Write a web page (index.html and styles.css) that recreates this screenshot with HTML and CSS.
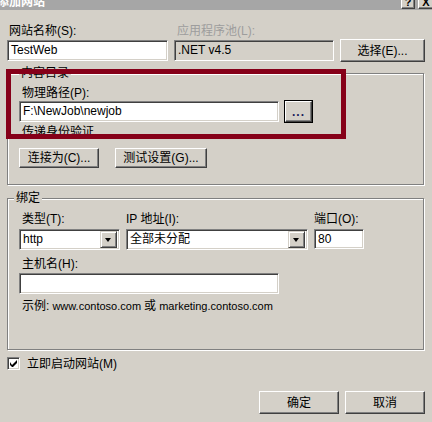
FILE: index.html
```html
<!DOCTYPE html>
<html>
    <head>
        <meta charset="UTF-8">
        <title>添加网站</title>
        <link rel="stylesheet" href="styles.css">
    </head>
    <body>
        <div class="titlebar">
            <span class="title">添加网站</span>
            <span class="cap-btn help">?</span>
            <span class="cap-btn close">X</span>
        </div>
        <div class="dialog">
            <div class="site-row">
                <label class="lbl">网站名称(S):</label>
                <label class="lbl disabled">应用程序池(L):</label>
                <span></span>
                <div class="edit">TestWeb</div>
                <div class="edit readonly">.NET v4.5</div>
                <button class="btn">选择(E)...</button>
            </div>
            <fieldset class="group content-dir">
                <legend>内容目录</legend>
                <label class="lbl">物理路径(P):</label>
                <div class="path-row">
                    <div class="edit path">F:\NewJob\newjob</div>
                    <button class="btn default browse">...</button>
                </div>
                <div class="lbl auth">传递身份验证</div>
                <div class="btn-row">
                    <button class="btn small connect">连接为(C)...</button>
                    <button class="btn small test">测试设置(G)...</button>
                </div>
            </fieldset>
            <fieldset class="group binding">
                <legend>绑定</legend>
                <div class="bind-row">
                    <label class="lbl indent">类型(T):</label>
                    <label class="lbl">IP 地址(I):</label>
                    <label class="lbl">端口(O):</label>
                    <div class="combo"><span class="value">http</span><span class="drop"></span></div>
                    <div class="combo"><span class="value cjk">全部未分配</span><span class="drop"></span></div>
                    <div class="edit port">80</div>
                </div>
                <label class="lbl indent host-lbl">主机名(H):</label>
                <div class="edit host"></div>
                <div class="hint"><span class="cjk">示例:</span> www.contoso.com <span class="cjk">或</span> marketing.contoso.com</div>
            </fieldset>
            <div class="check-row">
                <span class="checkbox">
                    <svg width="7" height="7" viewBox="0 0 7 7"><path d="M0 2v3l2 2h1l4-4V0L2 5z" fill="#000"/></svg>
                </span>
                <span class="lbl">立即启动网站(M)</span>
            </div>
            <div class="footer">
                <button class="btn wide">确定</button>
                <button class="btn wide">取消</button>
            </div>
        </div>
        <!-- marker drawn around the content directory box -->
        <div class="highlight"></div>
    </body>
</html>
```

FILE: styles.css
```css
html, body {
    margin:0;
    width:432px;
    height:422px;
    overflow:hidden;
}
body {
    position:relative;
    background:#d4d0c8;
    color:#000;
    font-family:"Liberation Sans", "Noto Sans CJK SC", sans-serif;
    font-size:12px;
    line-height:14px;
}
.titlebar {
    display:flex;
    height:10px;
    overflow:hidden;
    background:#a6a6a6;
}
.title {
    flex:1;
    margin:-5px 0 0 -3px;
    color:#fff;
    font-weight:bold;
    font-size:12px;
    line-height:14px;
}
.cap-btn {
    box-sizing:border-box;
    height:14px;
    margin-top:-5px;
    background:#d4d0c8;
    border:1px solid;
    border-color:#fff #404040 #404040 #fff;
    box-shadow:inset -1px -1px #808080;
    font-weight:bold;
    font-size:11px;
    line-height:13px;
    text-align:center;
}
.help {
    width:14px;
    margin-right:3px;
}
.close {
    width:16px;
    margin-right:-2px;
}
.dialog {
    padding:14px 0 0 7px;
}
.lbl {
    display:block;
    white-space:nowrap;
}
.disabled {
    color:#9d9d9d;
    padding-left:3px;
}
.site-row {
    display:grid;
    grid-template-columns:161px 160px 85px;
    grid-template-rows:14px 23px;
    column-gap:6px;
    row-gap:1px;
    align-items:center;
}
.site-row > .lbl:first-child {
    padding-left:2px;
}
.edit {
    box-sizing:border-box;
    height:21px;
    background:#fff;
    border:1px solid;
    border-color:#808080 #fff #fff #808080;
    box-shadow:inset 1px 1px #404040, inset -1px -1px #d4d0c8;
    padding-left:3px;
    font-size:12px;
    line-height:19px;
    white-space:nowrap;
    overflow:hidden;
}
.readonly {
    background:#d4d0c8;
}
.btn {
    box-sizing:border-box;
    height:23px;
    padding:0;
    background:#d4d0c8;
    border:1px solid;
    border-color:#fff #404040 #404040 #fff;
    box-shadow:inset -1px -1px #808080;
    font:inherit;
    color:#000;
}
.btn.default {
    outline:1px solid #000;
    outline-offset:0;
    border-color:#fff #404040 #404040 #fff;
}
.group {
    box-sizing:border-box;
    width:417px;
    margin:0;
    border:1px solid #808080;
    box-shadow:inset 1px 1px #fff, 1px 1px #fff;
    min-width:0;
}
.group legend {
    padding:0 2px;
    background:#d4d0c8;
    line-height:14px;
}
.content-dir {
    margin-top:4px;
    padding:6px 0 16px 11px;
}
.content-dir > .lbl:first-of-type {
    padding-left:3px;
}
.path-row {
    display:flex;
    align-items:center;
    gap:6px;
    height:23px;
}
.path {
    width:260px;
}
.browse {
    width:27px;
    height:21px;
    font-weight:bold;
    letter-spacing:1px;
    line-height:12px;
    color:#1a1a5a;
}
.auth {
    margin-top:2px;
    padding-left:3px;
}
.btn-row {
    display:flex;
    gap:16px;
    margin-top:9px;
}
.btn.small {
    height:20px;
}
.connect {
    width:80px;
}
.test {
    width:92px;
}
.binding {
    margin-top:6px;
    padding:7px 0 36px 11px;
}
.binding legend {
    margin-left:-5px;
}
.bind-row {
    display:grid;
    grid-template-columns:101px 182px 50px;
    grid-template-rows:14px 21px;
    column-gap:6px;
    row-gap:3px;
}
.indent {
    padding-left:3px;
}
.combo {
    box-sizing:border-box;
    display:flex;
    height:21px;
    background:#fff;
    border:1px solid;
    border-color:#808080 #fff #fff #808080;
    box-shadow:inset 1px 1px #404040, inset -1px -1px #d4d0c8;
    padding:1px 2px 2px 1px;
}
.combo .value {
    flex:1;
    padding-left:2px;
    line-height:17px;
}
.drop {
    box-sizing:border-box;
    position:relative;
    width:17px;
    height:17px;
    background:#d4d0c8;
    border:1px solid;
    border-color:#d4d0c8 #404040 #404040 #d4d0c8;
    box-shadow:inset 1px 1px #fff, inset -1px -1px #808080;
}
/* little black arrow in the drop button */
.drop::after {
    content:"";
    position:absolute;
    left:4px;
    top:6px;
    border-left:3.5px solid transparent;
    border-right:3.5px solid transparent;
    border-top:4px solid #000;
}
.port {
    height:20px;
}
.host-lbl {
    margin-top:7px;
}
.host {
    width:260px;
    margin-top:2px;
}
.hint {
    margin-top:5px;
    padding-left:3px;
    font-size:11px;
    white-space:nowrap;
}
.hint .cjk {
    font-size:12px;
}
.check-row {
    display:flex;
    align-items:center;
    gap:7px;
    margin-top:7px;
    height:13px;
}
.checkbox {
    box-sizing:border-box;
    display:flex;
    align-items:center;
    justify-content:center;
    width:13px;
    height:13px;
    background:#fff;
    border:1px solid;
    border-color:#808080 #fff #fff #808080;
    box-shadow:inset 1px 1px #404040, inset -1px -1px #d4d0c8;
}
.footer {
    display:flex;
    justify-content:flex-end;
    gap:6px;
    width:418px;
    margin-top:21px;
}
.btn.wide {
    width:80px;
    height:23px;
}
.highlight {
    position:absolute;
    left:6px;
    top:69px;
    width:340px;
    height:70px;
    box-sizing:border-box;
    border:5px solid #860019;
}
```
